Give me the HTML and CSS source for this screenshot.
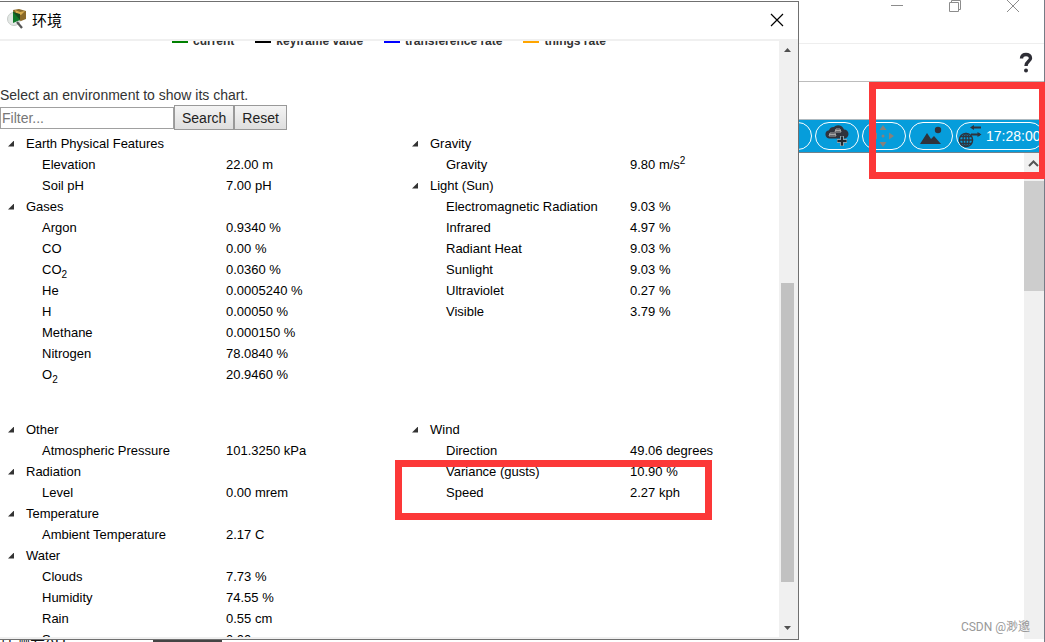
FILE: index.html
```
<!DOCTYPE html>
<html lang="zh-CN">
<head>
<meta charset="utf-8">
<title>环境</title>
<link rel="stylesheet" href="styles.css">
</head>
<body>
<div class="desktop">
  <main class="app">
    <div class="app-caption">
      <button class="cap-btn" aria-label="Minimize"><svg width="14" height="14" viewBox="0 0 14 14"><path d="M1 5.500h12" /></svg></button>
      <button class="cap-btn" aria-label="Restore"><svg width="14" height="14" viewBox="0 0 14 14"><path d="M1.500 2.500h9v9h-9zM3.500 2.500v-2h9v9h-2" /></svg></button>
      <button class="cap-btn" aria-label="Close window"><svg width="14" height="14" viewBox="0 0 14 14"><path d="M1 0l12 12M13 0L1 12" /></svg></button>
    </div>
    <div class="app-menu"><button class="help" aria-label="Help"><svg width="14" height="22" viewBox="0 0 14 22"><path d="M2.500 6.500C2.500 3.600 4.500 2.500 7 2.500s4.500 1.300 4.500 3.700c0 3.200-4.500 3.200-4.500 7.800" fill="none" stroke="#2e2e36" stroke-width="3.400"/><circle cx="7" cy="18.500" r="2" fill="#2e2e36"/></svg></button></div>
    <div class="app-blank"></div>
    <div class="toolbar">
      <button class="pill" aria-label="Devices"></button>
      <button class="pill" aria-label="New cluster">
        <svg width="26" height="24" viewBox="0 0 26 24"><path d="M5 14.500a4.200 4.200 0 0 1 0-8.300A5 5 0 0 1 10 3a6 6 0 0 1 10 2.500 4.300 4.300 0 0 1 0 9z" fill="#2f333c"/><g fill="none" stroke="#a8a8a8"><path d="M5 12l1-3h5l1 3zM6 10.500h5M11 8l1-3h4l1 3zM12 6.500h5"/></g><path d="M18 12v10M13 17h10" stroke="#8aa0aa" stroke-width="4"/><path d="M18 12.500v9M13.500 17h9" stroke="#25282e" stroke-width="2"/></svg>
      </button>
      <button class="pill" aria-label="Move object">
        <svg width="24" height="24" viewBox="0 0 24 24" fill="#87817c"><path d="M11 1l3.500 5h-7zM11 23l3.500-5h-7zM0 12l5-3.500v7zM22 12l-5-3.500v7z"/><circle cx="11" cy="12" r="1.500"/></svg>
      </button>
      <button class="pill" aria-label="Set background">
        <svg width="24" height="22" viewBox="0 0 24 22" fill="#2f333c"><path d="M1 19L8 8l4 6 3-3 7 8z"/><circle cx="19" cy="5" r="3.200"/></svg>
      </button>
      <button class="pill pill-time" aria-label="Environment 17:28:00">
        <svg width="24" height="24" viewBox="0 0 24 24" fill="none" stroke="#2f333c"><g stroke-width="1.400"><circle cx="8" cy="16" r="6.600"/><ellipse cx="8" cy="16" rx="3" ry="6.600"/><path d="M8 9.400v13.200M1.400 16h13.200M2.500 12.500h11M2.500 19.500h11"/></g><path d="M14 3.500h9M13 10.500h9" stroke-width="1.800"/><path d="M12 3.500l4-2.500v5zM23.500 10.500L19.500 8v5z" fill="#2f333c" stroke="none"/></svg>
        <span>17:28:00</span>
      </button>
    </div>
    <div class="workspace">
      <div class="canvas"></div>
      <div class="app-scroll"><svg width="20" height="28" viewBox="0 0 20 28"><path d="M5 13l4.500-4.500L14 13" fill="none" stroke="#555" stroke-width="2"/></svg><div class="app-thumb"></div></div>
    </div>
    <div class="app-footer"><span class="foot-text">连测差AU</span><span class="foot-device"></span></div>
  </main>

  <section class="dialog" role="dialog" aria-labelledby="dlg-title">
    <header class="titlebar">
      <svg width="22" height="22" viewBox="0 0 22 22"><circle cx="8" cy="10" r="6.500" fill="#e3e8e5" stroke="#c8cdca"/><path d="M7 1l6-1 7 2v8l-5 2-7-3z" fill="#8b6a2a"/><path d="M9 1l5 2 5-1-4 4-5-2z" fill="#d9ae50"/><path d="M7 2l7 9-7 3z" fill="#107a2b"/><path d="M7 3l7 8V5z" fill="#164d20"/><path d="M11 13l5 6" stroke="#555" stroke-width="2.200"/></svg>
      <h1 class="dlg-title" id="dlg-title">环境</h1>
      <button class="dlg-close" aria-label="Close"><svg width="14" height="14" viewBox="0 0 14 14"><path d="M1 1l12 12M13 1L1 13" stroke="#000" stroke-width="1.200"/></svg></button>
    </header>
    <div class="dlg-body">
      <div class="content">
        <div class="legend">
          <span class="key green">current</span>
          <span class="key black">keyframe value</span>
          <span class="key blue">transference rate</span>
          <span class="key orange">things rate</span>
        </div>
        <label class="prompt" for="filter">Select an environment to show its chart.</label>
        <form class="search">
          <input class="filter" id="filter" type="text" placeholder="Filter...">
          <button class="btn" type="button">Search</button>
          <button class="btn" type="reset">Reset</button>
        </form>
        <div class="groups">
          <table class="tree">
            <colgroup><col class="col-name"><col></colgroup>
            <tr><th colspan="2"><button class="twisty">Earth Physical Features</button></th></tr>
            <tr><td>Elevation</td><td>22.00 m</td></tr>
            <tr><td>Soil pH</td><td>7.00 pH</td></tr>
            <tr><th colspan="2"><button class="twisty">Gases</button></th></tr>
            <tr><td>Argon</td><td>0.9340 %</td></tr>
            <tr><td>CO</td><td>0.00 %</td></tr>
            <tr><td>CO<sub>2</sub></td><td>0.0360 %</td></tr>
            <tr><td>He</td><td>0.0005240 %</td></tr>
            <tr><td>H</td><td>0.00050 %</td></tr>
            <tr><td>Methane</td><td>0.000150 %</td></tr>
            <tr><td>Nitrogen</td><td>78.0840 %</td></tr>
            <tr><td>O<sub>2</sub></td><td>20.9460 %</td></tr>
          </table>
          <table class="tree">
            <colgroup><col class="col-name"><col></colgroup>
            <tr><th colspan="2"><button class="twisty">Gravity</button></th></tr>
            <tr><td>Gravity</td><td>9.80 m/s<sup>2</sup></td></tr>
            <tr><th colspan="2"><button class="twisty">Light (Sun)</button></th></tr>
            <tr><td>Electromagnetic Radiation</td><td>9.03 %</td></tr>
            <tr><td>Infrared</td><td>4.97 %</td></tr>
            <tr><td>Radiant Heat</td><td>9.03 %</td></tr>
            <tr><td>Sunlight</td><td>9.03 %</td></tr>
            <tr><td>Ultraviolet</td><td>0.27 %</td></tr>
            <tr><td>Visible</td><td>3.79 %</td></tr>
          </table>
          <table class="tree">
            <colgroup><col class="col-name"><col></colgroup>
            <tr><th colspan="2"><button class="twisty">Other</button></th></tr>
            <tr><td>Atmospheric Pressure</td><td>101.3250 kPa</td></tr>
            <tr><th colspan="2"><button class="twisty">Radiation</button></th></tr>
            <tr><td>Level</td><td>0.00 mrem</td></tr>
            <tr><th colspan="2"><button class="twisty">Temperature</button></th></tr>
            <tr><td>Ambient Temperature</td><td>2.17 C</td></tr>
            <tr><th colspan="2"><button class="twisty">Water</button></th></tr>
            <tr><td>Clouds</td><td>7.73 %</td></tr>
            <tr><td>Humidity</td><td>74.55 %</td></tr>
            <tr><td>Rain</td><td>0.55 cm</td></tr>
            <tr><td>Snow</td><td>0.00</td></tr>
          </table>
          <table class="tree">
            <colgroup><col class="col-name"><col></colgroup>
            <tr><th colspan="2"><button class="twisty">Wind</button></th></tr>
            <tr><td>Direction</td><td>49.06 degrees</td></tr>
            <tr><td>Variance (gusts)</td><td>10.90 %</td></tr>
            <tr><td>Speed</td><td>2.27 kph</td></tr>
          </table>
        </div>
      </div>
      <div class="dlg-scroll">
        <svg width="13" height="20" viewBox="0 0 13 20"><path d="M3 11l3.500-4 3.500 4z" fill="#505050"/></svg>
        <div class="track"><div class="dlg-thumb"></div></div>
        <svg width="13" height="20" viewBox="0 0 13 20"><path d="M3 9l3.500 4L10 9z" fill="#505050"/></svg>
      </div>
    </div>
  </section>

  <div class="mark mark-clock"></div>
  <div class="mark mark-wind"></div>
  <div class="watermark">CSDN @渺邈</div>
</div>
</body>
</html>
```
FILE: styles.css
```
* { box-sizing: border-box; }
body { margin: 0; font-family: "Liberation Sans", "Noto Sans CJK SC", sans-serif; color: #111; background: #fff; }
button { font: inherit; color: inherit; background: none; border: 0; padding: 0; }
svg { display: block; flex: none; }
.desktop { position: relative; height: 100vh; overflow: hidden; }

.app { height: 100%; display: flex; flex-direction: column; border-right: 1px solid #767b86; }
.app-caption { height: 44px; display: flex; justify-content: flex-end; align-items: flex-start; gap: 44px; padding-right: 24px; border-bottom: 1px solid #eee; }
.cap-btn svg { fill: none; stroke: #8c8c8c; }
.app-menu { height: 38px; display: flex; justify-content: flex-end; align-items: center; padding-right: 11px; border-bottom: 1px solid #bcbcbc; }
.app-blank { height: 37px; }
.toolbar { height: 34px; display: flex; justify-content: flex-end; align-items: center; gap: 3px; background: #069ddb; border-top: 1px solid #aeb9bf; border-bottom: 1px solid #73818a; }
.pill { width: 44px; height: 28px; flex: none; display: flex; align-items: center; justify-content: center; border: 1px solid #fff; border-radius: 14px; }
.pill-time { width: 88px; justify-content: flex-start; gap: 4px; padding-left: 1px; color: #fff; font-size: 14px; }
.workspace { flex: 1; min-height: 0; display: flex; }
.canvas { flex: 1; }
.app-scroll { width: 20px; background: #f0f0f0; }
.app-thumb { height: 110px; background: #cdcdcd; }
.app-footer { height: 3px; display: flex; align-items: center; gap: 92px; overflow: hidden; }
.foot-text { width: 61px; flex: none; font-size: 15px; line-height: 3px; white-space: nowrap; }
.foot-device { width: 69px; height: 3px; background: #444; }

.dialog { position: absolute; left: 0; right: 246px; top: 1px; bottom: 2px; display: flex; flex-direction: column; background: #fff; border: 1px solid #707070; border-left: 0; }
.titlebar { height: 39px; display: flex; align-items: center; gap: 4px; padding: 0 14px 2px 6px; border-bottom: 2px solid #f0f0f0; }
.dlg-title { flex: 1; margin: 0; font: 15px "Noto Sans CJK SC", sans-serif; color: #000; }
.dlg-body { flex: 1; min-height: 0; display: flex; border-bottom: 2px solid #f0f0f0; }
.content { flex: 1; overflow: hidden; }
.dlg-scroll { width: 19px; display: flex; flex-direction: column; padding: 0 2px; background: #f0f0f0; }
.track { flex: 1; display: flex; flex-direction: column; justify-content: flex-end; padding-bottom: 35px; }
.dlg-thumb { width: 13px; height: 299px; background: #c1c1c1; }

.legend { display: flex; gap: 21px; margin-top: -8px; padding-left: 172px; font-size: 12px; line-height: 16px; font-weight: bold; color: #333; white-space: nowrap; }
.key { display: flex; align-items: center; gap: 5px; }
.key::before { content: ""; width: 16px; height: 4px; background: currentColor; }
.green::before { background: #008000; }
.black::before { background: #000; }
.blue::before { background: #00f; }
.orange::before { background: #ffa500; }

.prompt { display: block; margin-top: 37px; font-size: 14px; line-height: 19px; color: #333; }
.search { display: flex; align-items: center; height: 25px; }
.filter { width: 174px; height: 22px; padding: 0 1px; border: 1px solid #a0a0a0; font: 14px "Liberation Sans", sans-serif; color: #333; }
.filter::placeholder { color: #777; }
.btn { height: 25px; padding: 0 7px; border: 1px solid #999; background: linear-gradient(#f4f4f4, #dedede); font-size: 14px; color: #222; }
.groups { display: grid; grid-template-columns: 404px 1fr; row-gap: 34px; align-items: start; padding-top: 3px; }
.tree { width: 350px; table-layout: fixed; border-collapse: collapse; font-size: 13px; line-height: 21px; color: #000; }
.tree th, .tree td { height: 21px; padding: 0; text-align: left; font-weight: normal; white-space: nowrap; }
.col-name { width: 226px; }
.tree td:first-child { padding-left: 42px; }
.twisty { display: flex; align-items: center; gap: 12px; height: 21px; padding-left: 8px; }
.twisty::before { content: ""; width: 6px; height: 6px; background: #333; clip-path: polygon(100% 0, 100% 100%, 0 100%); }
sub, sup { font-size: 10px; line-height: 0; }

.mark { position: absolute; border: 7px solid #fc3838; }
.mark-clock { right: -1px; top: 82px; width: 177px; height: 97px; }
.mark-wind { left: 395px; top: 460px; width: 317px; height: 60px; }
.watermark { position: absolute; right: 15px; bottom: 6px; font: 12px/18px Roboto, "Noto Sans CJK SC", sans-serif; color: #999; }
```
